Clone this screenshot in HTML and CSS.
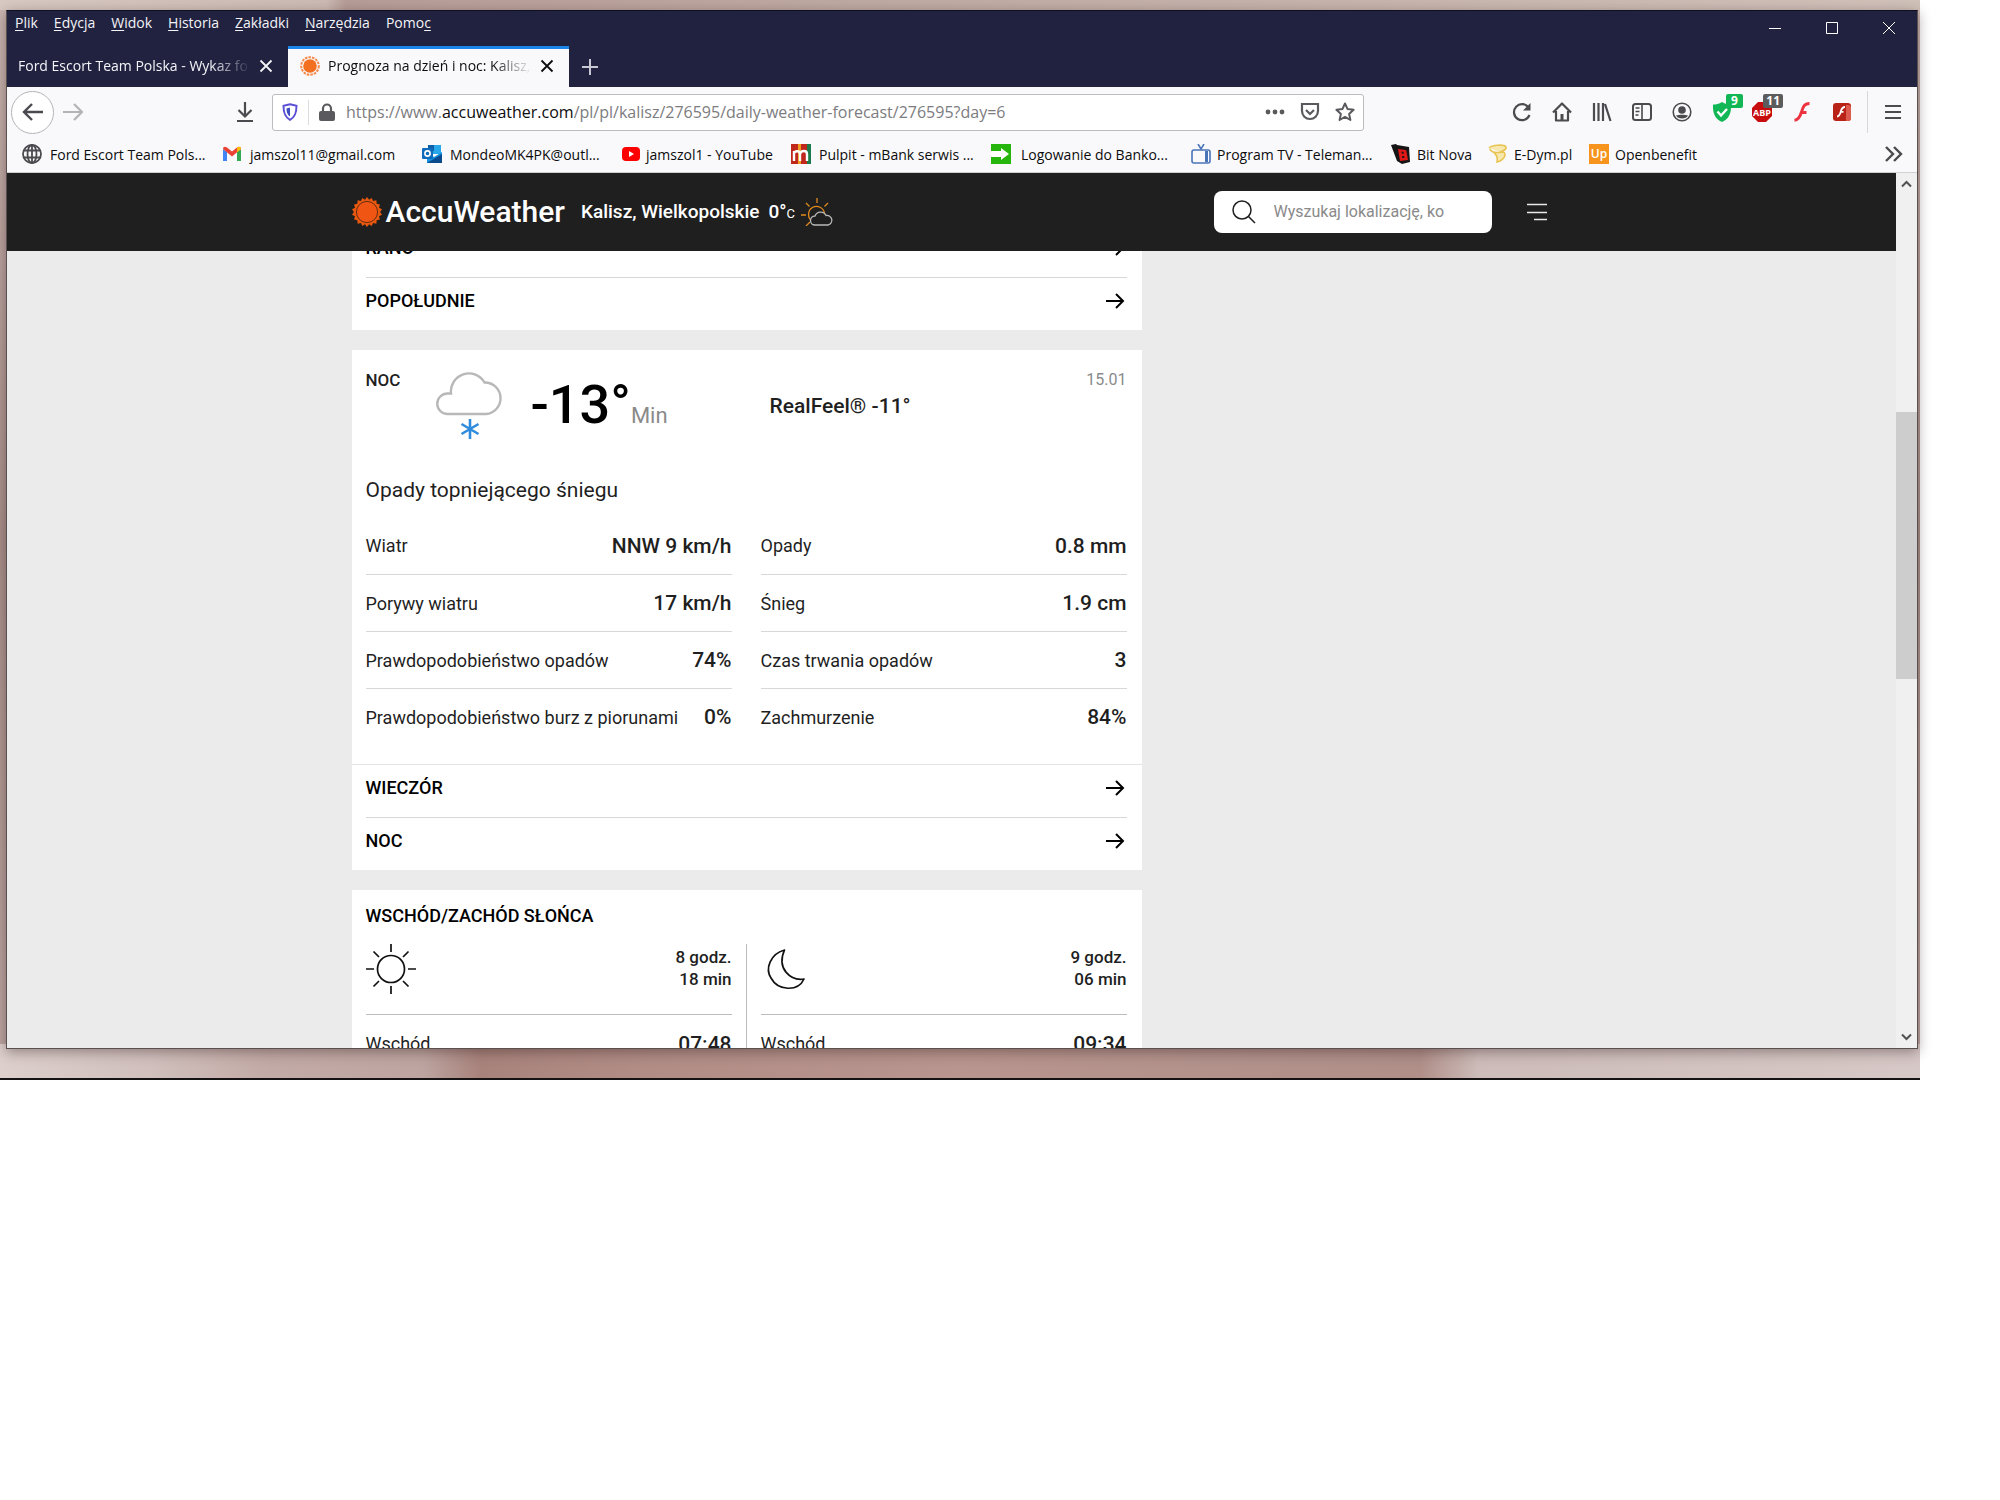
FILE: index.html
```html
<!DOCTYPE html>
<html lang="pl">
<head>
<meta charset="utf-8">
<title>Prognoza na dzień i noc: Kalisz</title>
<link rel="stylesheet" href="styles.css">
</head>
<body>
<svg class="defs" aria-hidden="true">
  <symbol id="close" viewBox="0 0 14 14"><path d="M1.500 1.500l11 11M12.500 1.500l-11 11" fill="none" stroke="currentColor" stroke-width="1.800"/></symbol>
  <symbol id="arrow" viewBox="0 0 20 18"><path d="M1 9h17M11 2l7 7-7 7" fill="none" stroke="currentColor" stroke-width="2"/></symbol>
  <symbol id="sun-logo" viewBox="0 0 32 32">
    <path d="M16 0l2.200 3L21 1l1.500 3.300L26 3.500l.3 3.700 3.500.8-1 3.500 3.200 1.500-2 3 2 3-3.200 1.500 1 3.500-3.500.8-.3 3.700-3.500-.8L21 31l-2.800-2L16 32l-2.200-3L11 31l-1.500-3.300L6 28.500l-.3-3.700-3.500-.8 1-3.500L0 19l2-3-2-3 3.200-1.500-1-3.500 3.500-.8L6 3.500l3.500.8L11 1l2.800 2z" fill="#e8590f"/>
    <circle cx="16" cy="16" r="11.300" fill="#f05514" stroke="#5b2a12" stroke-width="1"/>
  </symbol>
  <symbol id="sun-tab" viewBox="0 0 20 20">
    <circle cx="10" cy="10" r="8.800" fill="none" stroke="#f58a4a" stroke-width="2" stroke-dasharray="2.600 1"/>
    <circle cx="10" cy="10" r="6.800" fill="#f37021"/>
  </symbol>
</svg>

<div class="desktop">
  <div class="window">
    <div class="titlebar">
      <div class="title-top">
        <nav class="menubar">
          <a href="#"><u>P</u>lik</a><a href="#"><u>E</u>dycja</a><a href="#"><u>W</u>idok</a><a href="#"><u>H</u>istoria</a><a href="#"><u>Z</u>akładki</a><a href="#"><u>N</u>arzędzia</a><a href="#">Pomo<u>c</u></a>
        </nav>
        <div class="controls">
          <button aria-label="Minimalizuj"><svg width="14" height="14"><path d="M1 7.500h12" stroke="#fff"/></svg></button>
          <button aria-label="Maksymalizuj"><svg width="14" height="14"><path d="M1.500 1.500h11v11h-11z" fill="none" stroke="#fff"/></svg></button>
          <button aria-label="Zamknij"><svg width="14" height="14"><path d="M1 1l12 12M13 1L1 13" stroke="#fff"/></svg></button>
        </div>
      </div>
      <div class="tabs">
        <div class="tab"><span class="tab-text">Ford Escort Team Polska - Wykaz fo</span><button aria-label="Zamknij kartę"><svg width="14" height="14"><use href="#close"/></svg></button></div>
        <div class="tab active"><svg width="20" height="20"><use href="#sun-tab"/></svg><span class="tab-text">Prognoza na dzień i noc: Kalisz,</span><button aria-label="Zamknij kartę"><svg width="14" height="14"><use href="#close"/></svg></button></div>
        <button class="new-tab" aria-label="Nowa karta"><svg width="18" height="18"><path d="M9 1v16M1 9h16" stroke="#c9c9d3" stroke-width="2"/></svg></button>
      </div>
    </div>

    <div class="toolbar">
      <button class="back" aria-label="Wstecz"><svg width="22" height="20" fill="none" stroke="#4a4a4f" stroke-width="2.400"><path d="M21 10H2M10 2l-8 8 8 8"/></svg></button>
      <button class="forward" aria-label="Dalej"><svg width="22" height="20" fill="none" stroke="#b4b4b8" stroke-width="2.200"><path d="M1 10h19M12 2l8 8-8 8"/></svg></button>
      <button class="download" aria-label="Pobrane"><svg width="18" height="22" fill="none" stroke="#4a4a4f" stroke-width="2.200"><path d="M9 1v14M2.500 9L9 15.500 15.500 9M1 20h16"/></svg></button>
      <div class="urlbar">
        <svg width="16" height="18" class="shield"><path d="M8 1.200l6.500 1.600c0 6.500-1 11-6.500 14-5.500-3-6.500-7.500-6.500-14z" fill="none" stroke="#5b4fd6" stroke-width="2"/><path d="M8 4.500v9c-3-2-3.500-4.500-3.500-8z" fill="#3d4fc0"/></svg>
        <span class="sep"></span>
        <svg width="16" height="18" class="lock"><path d="M4 8V5.500a4 4 0 0 1 8 0V8" fill="none" stroke="#5a5a5e" stroke-width="2.200"/><rect y="8" width="16" height="10" rx="2" fill="#5a5a5e"/></svg>
        <span class="url">https://www.<b>accuweather.com</b>/pl/pl/kalisz/276595/daily-weather-forecast/276595?day=6</span>
        <button aria-label="Akcje"><svg width="20" height="20" fill="#5a5a5e"><circle cx="3" cy="10" r="2.400"/><circle cx="10" cy="10" r="2.400"/><circle cx="17" cy="10" r="2.400"/></svg></button>
        <button aria-label="Pocket"><svg width="20" height="20" fill="none" stroke="#5a5a5e" stroke-width="2.200"><path d="M2 2h16v7a8 8 0 0 1-16 0zM6 8l4 4 4-4"/></svg></button>
        <button aria-label="Dodaj zakładkę"><svg width="20" height="20" fill="none" stroke="#5a5a5e" stroke-width="2"><path d="M10 1.500l2.600 5.600 6 .7-4.500 4.100 1.300 6.100-5.400-3.100L4.600 18l1.300-6.100L1.400 7.800l6-.7z" stroke-linejoin="round"/></svg></button>
      </div>
      <div class="extensions">
        <button aria-label="Odśwież"><svg width="20" height="20" fill="none" stroke="#4a4a4f" stroke-width="2.200"><path d="M16.500 5.500A8 8 0 1 0 17.500 13"/><path d="M18.500 1v7.500H11z" fill="#4a4a4f" stroke="none"/></svg></button>
        <button aria-label="Strona startowa"><svg width="20" height="20" fill="none" stroke="#4a4a4f" stroke-width="2.200"><path d="M1 10.500l9-9 9 9M4 9v9.500h12V9" stroke-linejoin="round"/><path d="M8.500 12h3v6h-3z" fill="#4a4a4f" stroke="none"/></svg></button>
        <button aria-label="Biblioteka"><svg width="20" height="20" fill="none" stroke="#4a4a4f" stroke-width="2.200"><path d="M2 1v18M6.500 1v18M11 1v18M13 2l5.500 17"/></svg></button>
        <button aria-label="Panel boczny"><svg width="20" height="20" fill="none" stroke="#4a4a4f" stroke-width="2"><rect x="1" y="2" width="18" height="16" rx="2.500"/><path d="M10 2v16M3.500 6h4M3.500 9.500h4M3.500 13h3" stroke-width="1.600"/></svg></button>
        <button aria-label="Konto"><svg width="20" height="20"><circle cx="10" cy="10" r="8.800" fill="none" stroke="#4a4a4f" stroke-width="1.600"/><circle cx="10" cy="8" r="3.800" fill="#4a4a4f"/><path d="M4 13.500c3-1 9-1 12 0-1.500 4-10.500 4-12 0z" fill="#4a4a4f"/></svg></button>
        <button aria-label="Ochrona"><svg width="20" height="20"><path d="M10 0c3 2 6 2.500 9 2.500C19.500 11 17 17 10 20 3 17 .5 11 1 2.500 4 2.500 7 2 10 0z" fill="#12b755"/><path d="M5.500 9.500l3.500 4 6-6.500" fill="none" stroke="#fff" stroke-width="2.400"/></svg><span class="badge">9</span></button>
        <button aria-label="Adblock"><svg width="22" height="22"><path d="M7 1h8l6 6v8l-6 6H7l-6-6V7z" fill="#c70d0d"/><text x="11" y="15" class="abp">ABP</text></svg><span class="badge gray">11</span></button>
        <button aria-label="Flash"><svg width="20" height="20"><path d="M17.500 1.500C12 1.500 11 5 9.500 10 8 15 6.500 18 2.500 18.300M8.500 10.500h6" fill="none" stroke="#ee3340" stroke-width="3"/></svg></button>
        <button aria-label="Flash Player"><svg width="20" height="20"><rect x="1" y="1" width="18" height="18" rx="3" fill="#b92317"/><path d="M14 3h2a3 3 0 0 1 3 3v10a3 3 0 0 1-3 3h-2z" fill="#dc5a4e"/><path d="M13 5c-3 0-3.500 2-4.200 4.500C8 12.500 7 14.500 5 14.500M8 9.800h3.500" fill="none" stroke="#fff" stroke-width="1.800"/></svg></button>
      </div>
      <button class="app-menu" aria-label="Menu"><svg width="16" height="16" stroke="#4a4a4f" stroke-width="2.200"><path d="M0 2h16M0 8h16M0 14h16"/></svg></button>
    </div>

    <nav class="bookmarks">
      <a href="#"><svg width="20" height="20" fill="none" stroke="#4a4a4f" stroke-width="1.800"><circle cx="10" cy="10" r="9"/><ellipse cx="10" cy="10" rx="4.500" ry="9"/><path d="M10 1v18M2 6.500h16M2 13.500h16"/></svg>Ford Escort Team Pols...</a>
      <a href="#"><svg width="20" height="20"><path d="M1 5v12h4V8z" fill="#4285f4"/><path d="M15 8v9h4V5z" fill="#34a853"/><path d="M1 5c0-2 2-3 4-1.500L10 7.500l5-4C17 2 19 3 19 5L10 12.500z" fill="#ea4335"/><path d="M15 3.500C17 2 19 3 19 5l-4 3.500z" fill="#fbbc04"/></svg>jamszol11@gmail.com</a>
      <a href="#"><svg width="20" height="20"><path d="M6 1h13v9H6z" fill="#28a8ea"/><path d="M6 1h6v6H6z" fill="#0f5fa8"/><path d="M5 9l7 4 8-5v11H5z" fill="#1490df"/><path d="M5 19l15-9v9z" fill="#0a4a8f"/><rect y="4" width="11" height="11" rx="1" fill="#0f6cbd"/><circle cx="5.500" cy="9.500" r="2.600" fill="none" stroke="#fff" stroke-width="1.600"/></svg>MondeoMK4PK@outl...</a>
      <a href="#" class="near"><svg width="18" height="20"><rect y="3" width="18" height="14" rx="4" fill="#f00"/><path d="M7 7l5 3-5 3z" fill="#fff"/></svg>jamszol1 - YouTube</a>
      <a href="#"><svg width="20" height="20"><path d="M0 0h20v20H0z" fill="#c0281d"/><path d="M7 0h3v20H7z" fill="#f0a020"/><path d="M16 0h4v20h-4z" fill="#1d7a4a"/><path d="M3 17V7M3 9c2-3 6-2 6 1v7M9 10c1-4 7-4 7 0v7" fill="none" stroke="#fff" stroke-width="2.400"/></svg>Pulpit - mBank serwis ...</a>
      <a href="#" class="far"><svg width="20" height="20"><path d="M0 0h20v20H0z" fill="#26b50c"/><path d="M0 7h10V4l8 6-8 6v-3H0z" fill="#fff"/></svg>Logowanie do Banko...</a>
      <a href="#" class="near"><svg width="20" height="20" fill="none" stroke="#4a74b8" stroke-width="1.600"><rect x="1" y="6" width="18" height="13" rx="2"/><path d="M7 0l3 5 3-5"/><path d="M15.500 7v11" stroke-width="3"/></svg>Program TV - Teleman...</a>
      <a href="#" class="near"><svg width="20" height="20"><path d="M0 1l5-1 1 1 12 2 1 15-8 2-5-3z" fill="#151515"/><path d="M7 5l8 1 1 4 1 6-8 1zM10.500 7.500l.3 2 2 .2-.3-1.800zM11 12l.2 2 2.200-.2-.2-1.600z" fill="#e01818" fill-rule="evenodd"/></svg>Bit Nova</a>
      <a href="#" class="near"><svg width="20" height="20"><path d="M1 4c3-3 15-4 17-1 1 3-4 4-6 5M2 5c1 4 8 4 13 3 4 1 2 8-6 10 1-5 0-7-3-9" fill="#f7e8b0" stroke="#e9c452" stroke-width="1.600"/></svg>E-Dym.pl</a>
      <a href="#" class="near"><svg width="20" height="20"><path d="M0 0h20v20H0z" fill="#f7941d"/><text x="10" y="14" class="up">Up</text></svg>Openbenefit</a>
      <button class="more" aria-label="Więcej zakładek"><svg width="18" height="16" fill="none" stroke="#4a4a4f" stroke-width="2.400"><path d="M1 1l7 7-7 7M9 1l7 7-7 7"/></svg></button>
    </nav>

    <div class="viewport">
      <div class="page">
        <header class="site-header">
          <div class="container header-row">
            <a class="logo" href="#"><svg width="30" height="30"><use href="#sun-logo"/></svg>AccuWeather</a>
            <a class="location" href="#">Kalisz, Wielkopolskie</a>
            <span class="temp">0°<small>C</small></span>
            <svg width="32" height="28" fill="none" stroke-width="1.300" stroke="#e08a1e"><path d="M16 0v5M5 5l3.500 3.500M27 5l-3.500 3.500M0 17h5M5 28l4-4M11 23a8 8 0 1 1 12.500-7.500"/><path d="M14 27a4.500 4.500 0 0 1 0-9 6 6 0 0 1 11-.5 4.800 4.800 0 0 1 2 9.500z" stroke="#b9b9b9" fill="#1f1f1f"/></svg>
            <label class="search"><svg width="26" height="26" fill="none" stroke="#1f1f1f" stroke-width="1.500"><circle cx="11" cy="11" r="9"/><path d="M17.500 17.500l6.500 6.500"/></svg><input type="text" aria-label="Wyszukaj lokalizację" placeholder="Wyszukaj lokalizację, ko"></label>
            <button class="site-menu" aria-label="Menu"><svg width="20" height="18"><path d="M0 1.500h20M0 9.500h20M7 16.500h13" stroke="#e8e8e8" stroke-width="1.400"/></svg></button>
          </div>
        </header>
        <main class="container content">
          <section class="card">
            <a class="link-row" href="#">RANO<svg width="20" height="18"><use href="#arrow"/></svg></a>
            <a class="link-row" href="#">POPOŁUDNIE<svg width="20" height="18"><use href="#arrow"/></svg></a>
          </section>

          <section class="card">
            <div class="night">
              <div class="night-head">
                <h2 class="small-title">NOC</h2>
                <svg class="cloud" width="68" height="70" fill="none"><path d="M11.500 42a9.800 9.800 0 0 1 0-20.500h3.500A18 18 0 0 1 48.500 10.500H50a15.800 15.800 0 0 1 0 31.500z" stroke="#b8b8b8" stroke-width="2.400"/><path d="M34 47v20M25.500 52l17 10M42.500 52l-17 10" stroke="#2f8bdb" stroke-width="2.600"/></svg>
                <p class="big-temp">-13°<span>Min</span></p>
                <p class="realfeel">RealFeel® -11°</p>
                <span class="date">15.01</span>
              </div>
              <p class="phrase">Opady topniejącego śniegu</p>
              <div class="columns">
                <dl>
                  <div><dt>Wiatr</dt><dd>NNW 9 km/h</dd></div>
                  <div><dt>Porywy wiatru</dt><dd>17 km/h</dd></div>
                  <div><dt>Prawdopodobieństwo opadów</dt><dd>74%</dd></div>
                  <div><dt>Prawdopodobieństwo burz z piorunami</dt><dd>0%</dd></div>
                </dl>
                <dl>
                  <div><dt>Opady</dt><dd>0.8 mm</dd></div>
                  <div><dt>Śnieg</dt><dd>1.9 cm</dd></div>
                  <div><dt>Czas trwania opadów</dt><dd>3</dd></div>
                  <div><dt>Zachmurzenie</dt><dd>84%</dd></div>
                </dl>
              </div>
            </div>
            <a class="link-row" href="#">WIECZÓR<svg width="20" height="18"><use href="#arrow"/></svg></a>
            <a class="link-row" href="#">NOC<svg width="20" height="18"><use href="#arrow"/></svg></a>
          </section>

          <section class="card astro">
            <h2>WSCHÓD/ZACHÓD SŁOŃCA</h2>
            <div class="columns split">
              <div>
                <div class="astro-head"><svg width="50" height="50" fill="none" stroke="#111" stroke-width="1.700"><circle cx="25" cy="25" r="13.500"/><path d="M25 0v8M25 42v8M0 25h8M42 25h8M7.500 7.500l5.500 5.500M37 37l5.500 5.500M42.500 7.500L37 13M13 37l-5.500 5.500"/></svg><span>8 godz.<br>18 min</span></div>
                <dl><div><dt>Wschód</dt><dd>07:48</dd></div></dl>
              </div>
              <div>
                <div class="astro-head"><svg width="50" height="50" fill="none" stroke="#111" stroke-width="1.700"><path d="M23.500 6C9 10 4 25 10 34c7 13 27 14 33 1-13 2-28-10-19.500-29z" stroke-linejoin="round"/></svg><span>9 godz.<br>06 min</span></div>
                <dl><div><dt>Wschód</dt><dd>09:34</dd></div></dl>
              </div>
            </div>
          </section>
        </main>
      </div>
      <div class="scrollbar">
        <svg width="11" height="8"><path d="M1 6.500l4.500-4.500L10 6.500" fill="none" stroke="#505050" stroke-width="2"/></svg>
        <div class="track"><div class="thumb"></div></div>
        <svg width="11" height="8"><path d="M1 1.500L5.500 6 10 1.500" fill="none" stroke="#505050" stroke-width="2"/></svg>
      </div>
    </div>
  </div>
</div>
</body>
</html>
```

FILE: styles.css
```css
* { box-sizing: border-box; margin: 0; padding: 0; }
body { background: #fff; font-family: "Open Sans", "Noto Sans", sans-serif; color: #0c0c0d; }
a { color: inherit; text-decoration: none; }
button { border: 0; background: none; color: inherit; font: inherit; display: flex; align-items: center; justify-content: center; }
svg { display: block; flex: none; }
.defs { position: absolute; width: 0; height: 0; }

/* Desktop wallpaper */
.desktop {
  width: 96%;
  aspect-ratio: 16 / 9;
  padding: 10px 2px 29px 6px;
  border-bottom: 2px solid #141212;
  background:
    linear-gradient(90deg, #dccfcc 0, #d0bfbc 8%, #c2aaa6 14%, #bda4a0 22%, #a8837c 25%, #b08c85 33%, #b8958e 50%, #b3928c 62%, #b08f89 74%, #cdbcb9 77%, #d6c8c6 100%) bottom / 100% 34px no-repeat,
    linear-gradient(90deg, #d8c9c3 0, #cdbab4 17%, #b79d97 18%, #c2aea7 55%, #d0c1b9 100%) top / 100% 10px no-repeat,
    linear-gradient(#c9b5b1, #a98f8a 50%, #bda7a3);
}
.window {
  height: 100%;
  display: flex;
  flex-direction: column;
  border: 1px solid #5b5050;
  border-top-color: #0e0f20;
  box-shadow: 0 3px 12px rgba(40, 20, 20, .4);
  background: #f9f9fb;
}

/* Title bar and tabs */
.titlebar { background: #20223f; color: #f4f4f8; font-size: 14px; }
.title-top { display: flex; justify-content: space-between; height: 35px; }
.menubar { display: flex; gap: 16px; padding-left: 8px; line-height: 24px; }
.menubar u { text-underline-offset: 2px; }
.controls { display: flex; padding-top: 2px; }
.controls button { width: 57px; height: 30px; }
.tabs { display: flex; height: 41px; }
.tab { width: 281px; display: flex; align-items: center; gap: 8px; padding: 0 15px 2px 11px; }
.tab.active { background: #f9f9fb; color: #0c0c0d; border-top: 3px solid #1a84e8; padding-left: 12px; padding-bottom: 5px; }
.tab-text { flex: 1; white-space: nowrap; mask-image: linear-gradient(90deg, #000 calc(100% - 40px), transparent); }
.new-tab { width: 42px; }

/* Navigation toolbar */
.toolbar { display: flex; align-items: center; height: 50px; padding: 0 7px 0 4px; }
.back { width: 43px; height: 43px; border: 1px solid #b5b5b9; border-radius: 50%; background: #fff; }
.forward { width: 38px; height: 40px; }
.download { width: 38px; height: 40px; margin-left: 134px; }
.urlbar { flex: 1; display: flex; align-items: center; height: 37px; margin-left: 8px; border: 1px solid #bcbcc0; border-radius: 3px; background: #fff; padding: 0 8px; }
.shield { margin-left: 1px; }
.sep { width: 1px; height: 25px; margin: 0 10px; background: #dcdce0; }
.lock { margin-right: 11px; }
.url { flex: 1; font-size: 16px; color: #7c7c80; white-space: nowrap; }
.url b { font-weight: 400; color: #0c0c0d; }
.urlbar button { width: 35px; height: 34px; }
.urlbar button:last-child { width: 20px; margin: 0 0 0 8px; }
.extensions { display: flex; margin-left: 138px; padding-right: 5px; border-right: 1px solid #d7d7db; }
.extensions button { width: 40px; height: 42px; position: relative; }
.badge { position: absolute; top: 3px; right: -1px; min-width: 17px; padding: 0 3px; border-radius: 2px; background: #12b755; color: #fff; font-size: 12px; line-height: 14px; font-weight: 700; }
.badge.gray { background: #5c5c5c; }
.abp { font: 700 9px "Open Sans", sans-serif; fill: #fff; text-anchor: middle; }
.up { font: 600 12px "Open Sans", sans-serif; fill: #fff; text-anchor: middle; }
.app-menu { width: 34px; height: 40px; margin-left: 8px; }

/* Bookmarks */
.bookmarks {
  display: grid;
  grid-template-columns: repeat(3, 200px) 169px repeat(3, 200px) 97px 101px 1fr auto;
  align-items: center;
  height: 36px;
  padding: 0 14px 1px 15px;
  border-bottom: 1px solid #d0d0d3;
  font-size: 14px;
}
.bookmarks a { display: flex; align-items: center; gap: 8px; white-space: nowrap; }
.bookmarks .near { gap: 6px; }
.bookmarks .far { gap: 10px; }
.more { width: 18px; }

/* Web page */
.viewport { flex: 1; min-height: 0; display: flex; overflow: hidden; background: #ebebeb; }
.page { flex: 1; min-width: 0; overflow: hidden; font-family: Roboto, "Liberation Sans", sans-serif; color: #1f1f1f; }
.container { width: 1200px; max-width: 100%; margin: 0 auto; }
.site-header { position: relative; z-index: 1; background: #1f1f1f; color: #fff; }
.header-row { display: flex; align-items: center; height: 78px; padding-bottom: 1px; }
.logo { display: flex; align-items: center; gap: 4px; font-size: 30px; font-weight: 500; }
.location { margin-left: 16px; font-size: 19px; font-weight: 500; }
.temp { margin: 0 6px 0 9px; font-size: 19px; font-weight: 500; }
.temp small { font-size: 13px; font-weight: 400; }
.search { display: flex; align-items: center; width: 278px; height: 42px; margin-left: auto; padding: 0 44px 0 17px; border-radius: 8px; background: #fff; }
.search input { flex: 1; min-width: 0; margin-left: 17px; border: 0; outline: 0; font: 400 16px Roboto, sans-serif; }
.search input::placeholder { color: #8a8a8a; opacity: 1; }
.site-menu { width: 20px; height: 40px; margin: 0 5px 0 35px; }

/* The page is scrolled so that the first card slides under the header */
.content { margin-top: -26px; display: flex; flex-direction: column; gap: 20px; align-items: flex-start; }
.card { width: 790px; background: #fff; }
.link-row { display: flex; justify-content: space-between; height: 52px; margin: 0 15px 0 14px; padding: 11px 2px 17px 0; line-height: 24px; font-size: 18px; font-weight: 500; color: #000; }
.link-row svg { margin-top: 3px; }
.link-row + .link-row { border-top: 1px solid #d8d8d8; height: 53px; }
.night { padding: 18px 15px 19px 14px; border-bottom: 1px solid #e4e4e4; }
.night-head { display: grid; grid-template-columns: 70px 95px 239px 1fr auto; align-items: start; height: 74px; }
.small-title { font-size: 17px; line-height: 24px; font-weight: 500; }
.cloud { margin-top: 4px; }
.big-temp { font-size: 54px; line-height: 74px; font-weight: 500; color: #000; }
.big-temp span { font-size: 22px; font-weight: 400; color: #8a8a8a; }
.realfeel { padding-top: 25px; font-size: 21px; line-height: 26px; font-weight: 500; }
.date { font-size: 16px; line-height: 24px; color: #8a8a8a; }
.phrase { margin-top: 35px; font-size: 21px; line-height: 26px; }
.columns { display: grid; grid-template-columns: 1fr 1fr; gap: 29px; }
.night .columns { margin-top: 14px; }
dl > div { display: flex; justify-content: space-between; align-items: center; height: 57px; white-space: nowrap; }
dl > div + div { border-top: 1px solid #d8d8d8; }
dt { font-size: 18px; }
dd { font-size: 21px; font-weight: 500; }
.astro { padding: 13px 15px 13px 14px; }
.astro h2 { font-size: 18px; line-height: 26px; font-weight: 500; color: #000; }
.split { position: relative; margin-top: 15px; }
.split::before { content: ""; position: absolute; left: 50%; top: 0; bottom: 0; border-left: 1px solid #bcbcbc; }
.astro-head { display: flex; justify-content: space-between; height: 71px; border-bottom: 1px solid #bcbcbc; font-size: 17px; line-height: 22px; font-weight: 500; text-align: right; padding-bottom: 20px; }
.astro-head span { padding-top: 2px; }

/* Scroll bar */
.scrollbar { width: 21px; display: flex; flex-direction: column; align-items: center; padding: 7px 0; background: #f0f0f0; }
.track { flex: 1; width: 100%; padding-top: 224px; }
.thumb { height: 31%; min-height: 267px; background: #cdcdcd; }
```
